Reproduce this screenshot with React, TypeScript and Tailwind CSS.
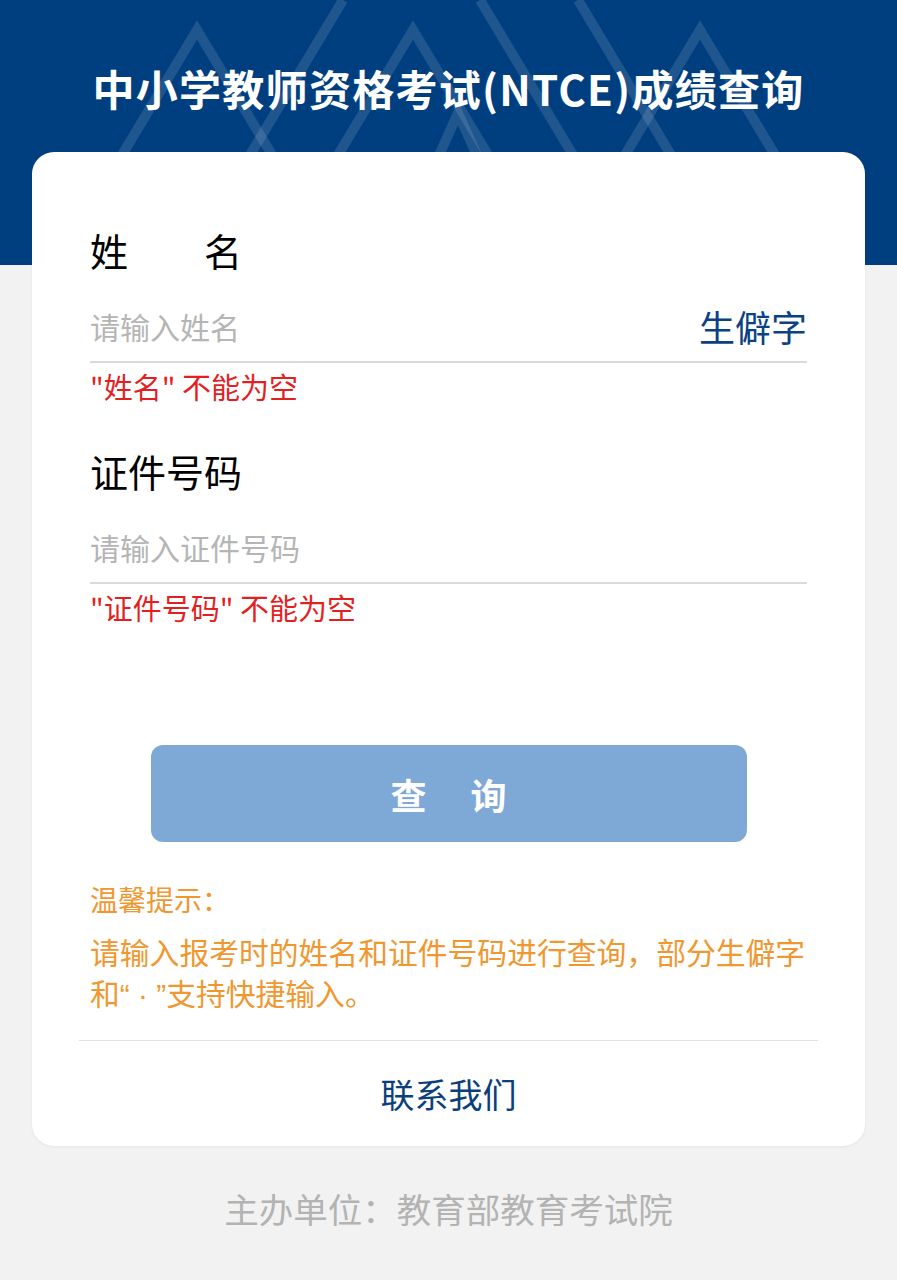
const font = { fontFamily: '"Noto Sans CJK SC", "Noto Sans", sans-serif' }

const Pattern = () => (
    <svg className="absolute inset-0" width="897" height="265" viewBox="0 0 897 265" fill="none">
        <g stroke="#ffffff" strokeOpacity="0.12" strokeWidth="10">
            <polyline points="56,265 197,30 338,265" />
            <polyline points="272,265 413,30 554,265" />
            <polyline points="559,265 700,30 841,265" />
            <line x1="343" y1="0" x2="184" y2="265" />
            <line x1="480" y1="0" x2="639" y2="265" />
            <line x1="578" y1="0" x2="737" y2="265" />
            <polyline points="390,265 458,113 526,265" />
        </g>
    </svg>
)

const Field = ({ label, placeholder, error, extra }: { label: string; placeholder: string; error: string; extra?: string }) => (
    <div>
        {/* label */}
        <div className="h-[50px] text-[38px] leading-[50px] text-black whitespace-pre">{label}</div>
        {/* input */}
        <div className="h-[88px] pt-[16px] flex items-center justify-between border-b-2 border-[#dadada]">
            <span className="text-[30px] text-[#b5b5b5]">{placeholder}</span>
            {extra && <span className="text-[36px] text-[#0b4283]">{extra}</span>}
        </div>
        {/* error */}
        <div className="mt-[3px] text-[29px] leading-[40px] text-[#e41f1f]">{error}</div>
    </div>
)

export default function App() {
    return (
        <div className="min-h-screen bg-[#f2f2f2] pb-8" style={font}>
            {/* header */}
            <div className="relative h-[265px] bg-[#003f7f] overflow-hidden">
                <Pattern />
                <h1 className="relative pt-[63px] text-center text-[42px] leading-[50px] tracking-[1.3px] font-bold text-white">
                    中小学教师资格考试(NTCE)成绩查询
                </h1>
            </div>

            {/* card */}
            <div className="relative mx-[32px] -mt-[113px] rounded-[22px] bg-white shadow-[0_1px_3px_rgba(0,0,0,0.06)]">
                <div className="px-[58px] pt-[73px]">
                    <Field label={"姓\u3000\u3000名"} placeholder="请输入姓名" error={'"姓名" 不能为空'} extra="生僻字" />
                    <div className="mt-[40px]">
                        <Field label="证件号码" placeholder="请输入证件号码" error={'"证件号码" 不能为空'} />
                    </div>
                </div>

                <div className="mt-[118px] flex justify-center">
                    <button className="w-[596px] h-[97px] rounded-[12px] bg-[#7ea8d6] flex items-center justify-center gap-[44px] text-[36px] font-bold text-white">
                        <span>查</span>
                        <span>询</span>
                    </button>
                </div>

                {/* tips */}
                <div className="px-[58px] mt-[37px] text-[#f0972f]">
                    <div className="text-[28px] leading-[40px]">温馨提示：</div>
                    <p className="mt-[12px] text-[29.8px] leading-[41px] whitespace-nowrap">
                        请输入报考时的姓名和证件号码进行查询，部分生僻字
                        <br />
                        和<span style={{ fontFamily: '"Liberation Sans", sans-serif' }}>“ · ”</span>支持快捷输入。
                    </p>
                </div>

                <div className="mx-[47px] mt-[25px] border-t border-[#e3e3e3]" />

                <div className="h-[105px] flex items-center justify-center text-[34px] text-[#0b3f7c]">
                    联系我们
                </div>
            </div>

            {/* footer */}
            <div className="h-[126px] flex items-center justify-center text-[34.5px] text-[#b3b3b3]">
                主办单位：教育部教育考试院
            </div>
        </div>
    )
}
